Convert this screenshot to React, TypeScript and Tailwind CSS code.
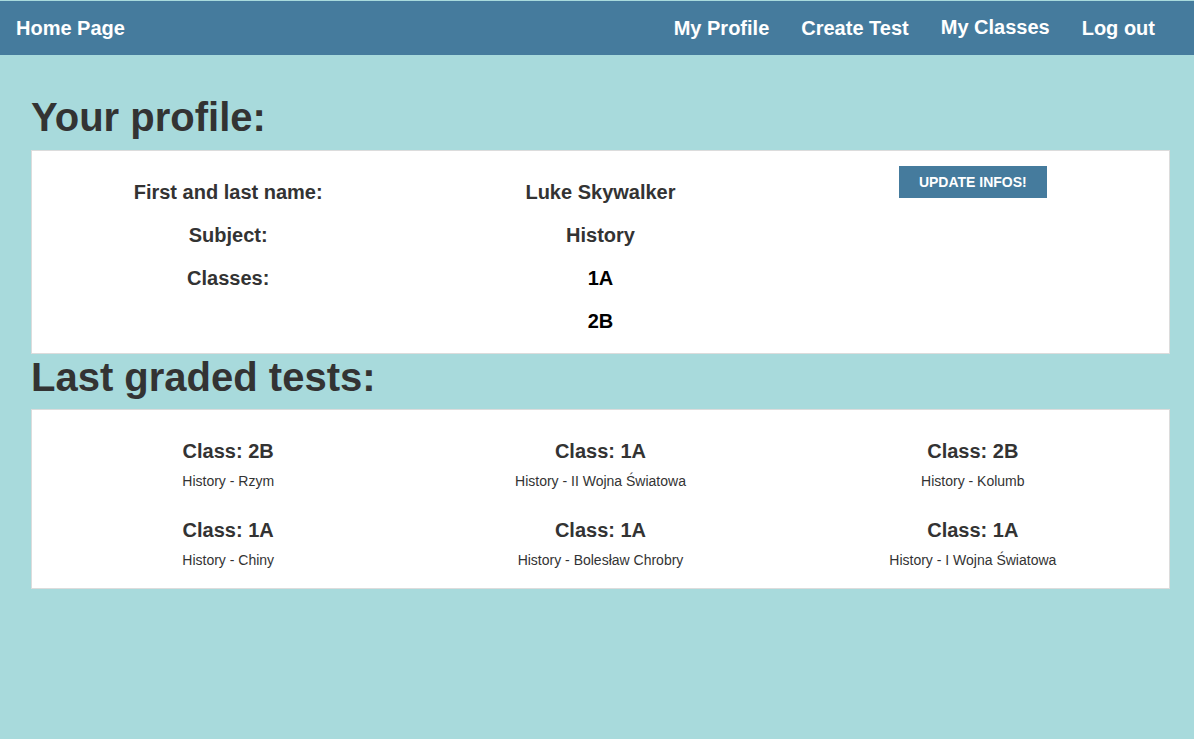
const links = ['My Profile', 'Create Test', 'My Classes', 'Log out']

const profileRows = [
  { label: 'First and last name:', value: 'Luke Skywalker' },
  { label: 'Subject:', value: 'History' },
  { label: 'Classes:', value: '1A' },
]

const tests = [
  { cls: '2B', name: 'History - Rzym' },
  { cls: '1A', name: 'History - II Wojna Światowa' },
  { cls: '2B', name: 'History - Kolumb' },
  { cls: '1A', name: 'History - Chiny' },
  { cls: '1A', name: 'History - Bolesław Chrobry' },
  { cls: '1A', name: 'History - I Wojna Światowa' },
]

export default function App() {
  return (
    <div className="min-h-screen bg-[#a8dadc] pt-px text-[#333] font-['Liberation_Sans',Arial,sans-serif]">
      {/* Navbar */}
      <nav className="h-[54px] bg-[#457b9d] flex items-center justify-between pl-4 pr-[39px] text-white text-[20px] font-bold leading-[23px]">
        <a className="cursor-pointer">Home Page</a>
        <div className="flex items-center gap-8">
          {links.map((l) => (
            <a key={l} className={`cursor-pointer ${l === 'My Classes' ? '-translate-y-px' : ''}`}>
              {l}
            </a>
          ))}
        </div>
      </nav>

      <main className="pl-[31px] pr-[24px] pt-[39px]">
        <h1 className="text-[40px] font-bold leading-[46px] mb-[10px]">Your profile:</h1>

        {/* Profile card */}
        <section className="bg-white border border-[#dcdcdc] grid grid-cols-3 px-[10px] pt-[20px] pb-[10px] text-[20px] font-bold leading-[23px]">
          <div>
            {profileRows.map((r) => (
              <div key={r.label} className="h-[43px] flex items-center justify-center">
                {r.label}
              </div>
            ))}
          </div>
          <div>
            {profileRows.map((r) => (
              <div
                key={r.label}
                className={`h-[43px] flex items-center justify-center ${r.value === '1A' ? 'text-black' : ''}`}
              >
                {r.value}
              </div>
            ))}
            <div className="h-[43px] flex items-center justify-center text-black">2B</div>
          </div>
          <div className="flex justify-center items-start -mt-[5px]">
            <button className="bg-[#457b9d] text-white text-[14px] font-bold leading-[16px] px-5 py-2 w-[148px]">
              UPDATE INFOS!
            </button>
          </div>
        </section>

        <h1 className="text-[40px] font-bold leading-[46px] mb-[9px]">Last graded tests:</h1>

        {/* Tests card */}
        <section className="bg-white border border-[#dcdcdc] grid grid-cols-3 gap-y-[30px] px-[10px] pt-[30px] pb-[20px]">
          {tests.map((t, i) => (
            <div key={i} className="flex flex-col items-center">
              <div className="text-[20px] font-bold leading-[23px]">Class: {t.cls}</div>
              <div className="text-[14px] leading-[16px] mt-[10px]">{t.name}</div>
            </div>
          ))}
        </section>
      </main>
    </div>
  )
}
